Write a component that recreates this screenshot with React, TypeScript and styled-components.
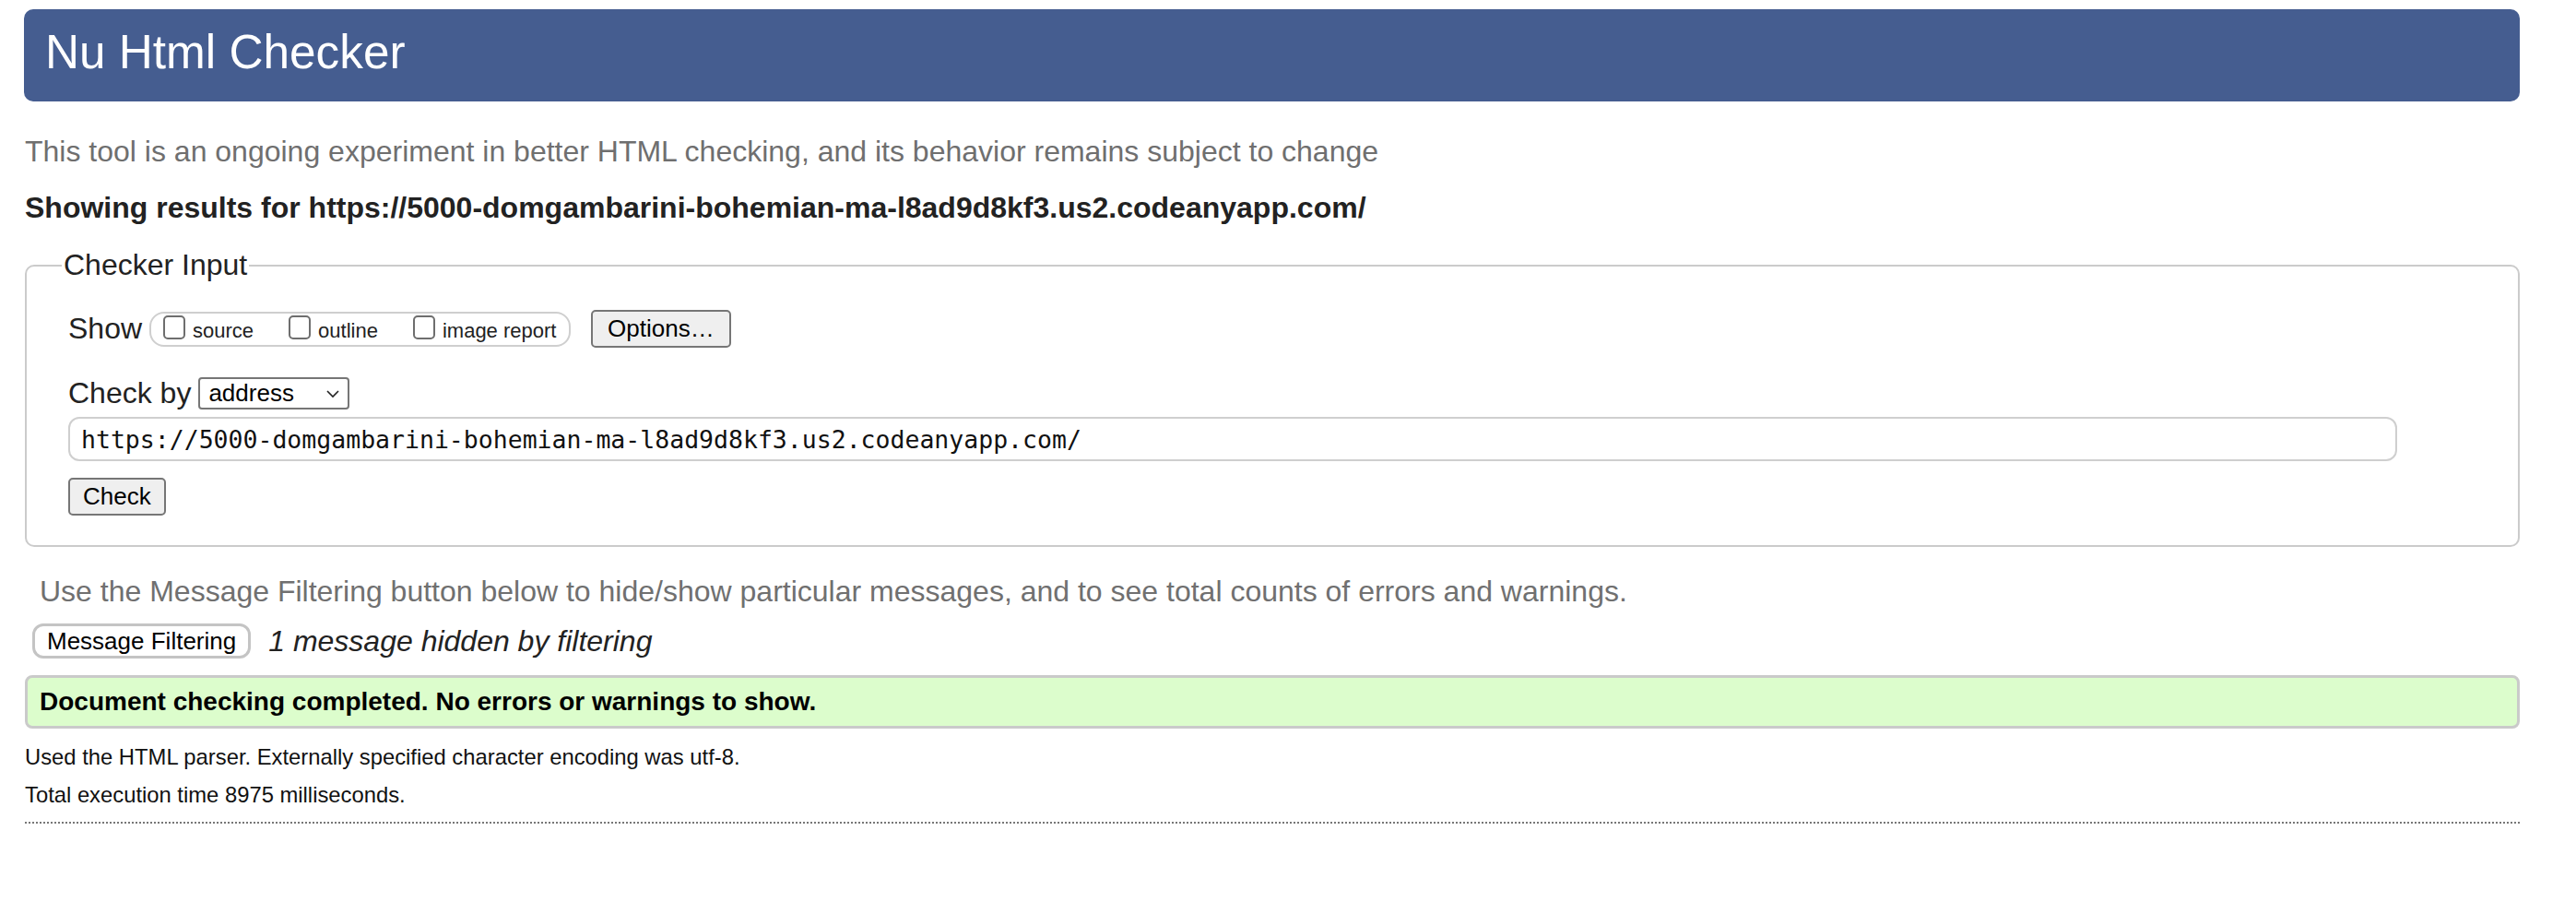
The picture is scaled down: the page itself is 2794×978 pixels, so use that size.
import React from "react";
import styled, { createGlobalStyle } from "styled-components";

const GlobalStyle = createGlobalStyle`
  html, body {
    margin: 0;
    padding: 0;
    background: #fff;
  }
  body {
    font-family: "Liberation Sans", Arial, sans-serif;
    color: #222;
  }
`;

const Page = styled.div`
  padding: 10px 61px 0 26px;
`;

const Header = styled.h1`
  margin: 0;
  height: 100px;
  box-sizing: border-box;
  padding: 0 0 6px 23px;
  line-height: 94px;
  border-radius: 10px;
  background: #455d90;
  color: #fff;
  font-size: 51.3px;
  font-weight: 400;
`;

const Intro = styled.p`
  margin: 34px 0 0 1px;
  font-size: 32px;
  line-height: 40px;
  color: #6f6f6f;
`;

const Showing = styled.p`
  margin: 21px 0 0 1px;
  font-size: 32px;
  line-height: 40px;
  font-weight: 700;
  color: #222;
`;

const Fieldset = styled.fieldset`
  margin: 24px 0 0 1px;
  padding: 0 40px 32px 45px;
  border: 2px solid #cbcbcb;
  border-radius: 10px;
`;

const Legend = styled.legend`
  margin-left: -7px;
  padding: 0 2px;
  font-size: 32px;
  line-height: 37px;
  color: #222;
`;

const Row = styled.div<{ $top: number }>`
  display: flex;
  align-items: center;
  margin-top: ${(p) => p.$top}px;
  font-size: 32px;
  color: #222;
`;

const RowLabel = styled.span`
  margin-right: 8px;
`;

const CheckGroup = styled.div`
  display: flex;
  align-items: center;
  height: 34px;
  padding: 0 0 0 13px;
  width: 440px;
  border: 2px solid #cfcfcf;
  border-radius: 16px;
  margin-right: 22px;
`;

const CheckItem = styled.label`
  display: flex;
  align-items: flex-end;
  margin-right: 38px;
  font-size: 22px;
  color: #222;

  &:last-child {
    margin-right: 0;
  }
`;

const Box = styled.span`
  width: 20px;
  height: 22px;
  border: 2px solid #6e6e6e;
  border-radius: 5px;
  margin-right: 8px;
  margin-bottom: 4px;
  background: #fff;
`;

const Button = styled.button`
  height: 41px;
  padding: 0 16px;
  border: 2px solid #767676;
  border-radius: 5px;
  background: #efefef;
  font-family: "Liberation Sans", Arial, sans-serif;
  font-size: 26px;
  color: #000;
`;

const Select = styled.div`
  display: flex;
  align-items: center;
  justify-content: space-between;
  box-sizing: border-box;
  width: 164px;
  height: 35px;
  padding: 0 8px 0 9px;
  border: 2px solid #767676;
  border-radius: 4px;
  background: #fff;
  font-size: 26px;
  color: #000;
`;

const UrlInput = styled.div`
  box-sizing: border-box;
  width: 2526px;
  height: 48px;
  margin-top: 7px;
  padding: 0 12px;
  display: flex;
  align-items: center;
  border: 2px solid #cfcfcf;
  border-radius: 12px;
  font-family: "DejaVu Sans Mono", "Liberation Mono", monospace;
  font-size: 26.5px;
  color: #111;
`;

const CheckButton = styled(Button)`
  display: block;
  margin-top: 18px;
  padding: 0 14px;
`;

const Hint = styled.p`
  margin: 28px 0 0 17px;
  font-size: 32px;
  line-height: 40px;
  color: #707070;
`;

const FilterRow = styled.div`
  display: flex;
  align-items: center;
  margin: 15px 0 0 9px;
`;

const FilterButton = styled.button`
  height: 38px;
  padding: 0 13px;
  border: 3px solid #c4c4c4;
  border-radius: 12px;
  background: #fff;
  font-family: "Liberation Sans", Arial, sans-serif;
  font-size: 26px;
  color: #000;
`;

const Hidden = styled.em`
  margin-left: 19px;
  font-size: 32px;
  color: #222;
`;

const Success = styled.div`
  box-sizing: border-box;
  height: 58px;
  margin: 18px 0 0 1px;
  padding: 0 13px;
  display: flex;
  align-items: center;
  border: 3px solid #cacaca;
  border-radius: 8px;
  background: #dcfdcc;
  font-size: 28px;
  font-weight: 700;
  color: #000;
`;

const Meta = styled.p<{ $top: number }>`
  margin: ${(p) => p.$top}px 0 0 1px;
  font-size: 23.8px;
  line-height: 30px;
  color: #111;
`;

const Rule = styled.hr`
  margin: 14px 0 0 1px;
  border: 0;
  border-top: 2px dotted #777;
`;

const Chevron = () => (
  <svg width="16" height="10" viewBox="0 0 16 10">
    <path d="M2 2 L8 8 L14 2" fill="none" stroke="#222" strokeWidth="1.6" />
  </svg>
);

const url = "https://5000-domgambarini-bohemian-ma-l8ad9d8kf3.us2.codeanyapp.com/";

export default function App() {
  return (
    <Page>
      <GlobalStyle />
      <Header>Nu Html Checker</Header>
      <Intro>
        This tool is an ongoing experiment in better HTML checking, and its behavior remains subject to change
      </Intro>
      <Showing>Showing results for {url}</Showing>

      <Fieldset>
        <Legend>Checker Input</Legend>
        <Row $top={30}>
          <RowLabel>Show</RowLabel>
          <CheckGroup>
            <CheckItem>
              <Box />
              source
            </CheckItem>
            <CheckItem>
              <Box />
              outline
            </CheckItem>
            <CheckItem>
              <Box />
              image report
            </CheckItem>
          </CheckGroup>
          <Button>Options…</Button>
        </Row>
        <Row $top={31}>
          <RowLabel>Check by</RowLabel>
          <Select>
            address
            <Chevron />
          </Select>
        </Row>
        <UrlInput>{url}</UrlInput>
        <CheckButton>Check</CheckButton>
      </Fieldset>

      <Hint>
        Use the Message Filtering button below to hide/show particular messages, and to see total counts of errors and warnings.
      </Hint>
      <FilterRow>
        <FilterButton>Message Filtering</FilterButton>
        <Hidden>1 message hidden by filtering</Hidden>
      </FilterRow>
      <Success>Document checking completed. No errors or warnings to show.</Success>
      <Meta $top={16}>Used the HTML parser. Externally specified character encoding was utf-8.</Meta>
      <Meta $top={11}>Total execution time 8975 milliseconds.</Meta>
      <Rule />
    </Page>
  );
}
